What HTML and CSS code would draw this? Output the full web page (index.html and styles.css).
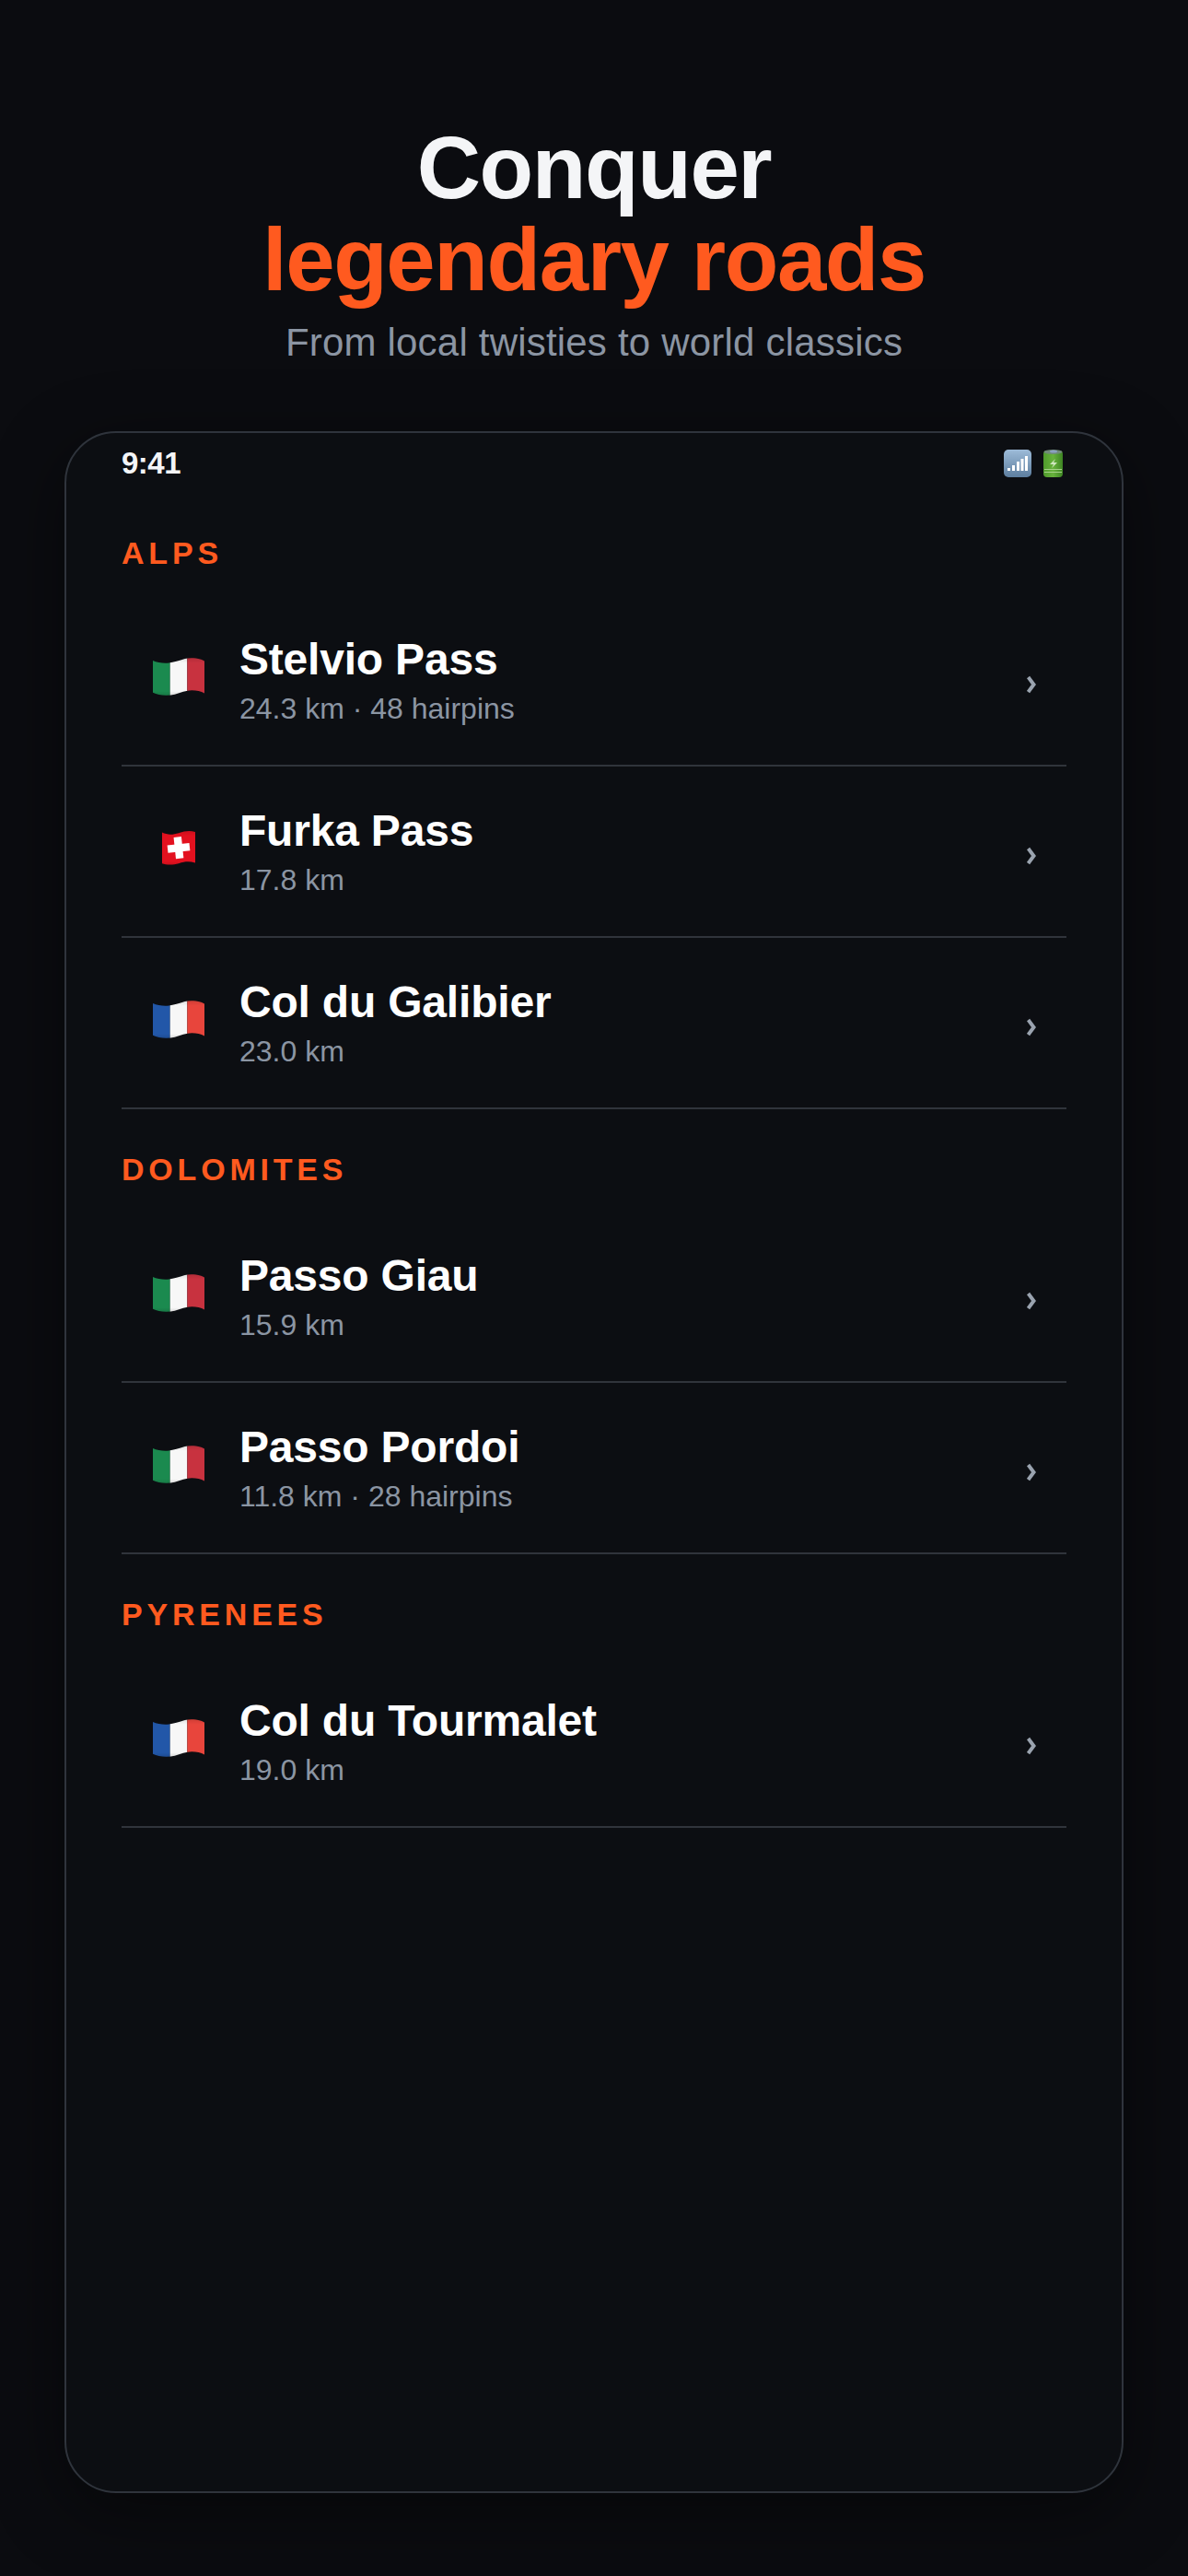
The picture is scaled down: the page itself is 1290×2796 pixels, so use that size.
FILE: index.html
```html
<!DOCTYPE html>
<html lang="en">
<head>
<meta charset="utf-8">
<title>Conquer legendary roads</title>
<link rel="stylesheet" href="styles.css">
</head>
<body>
<svg class="defs" width="0" height="0" aria-hidden="true">
  <defs>
    <clipPath id="wave-wide"><path d="M0 6C8 10 20 11 28 10C36 9 46 6 56 3C64 1 72 1 84 4C87 5 89 6 90 7V63C84 60 76 58 68 58C58 58 48 62 38 65C26 68 10 67 0 62Z"/></clipPath>
    <clipPath id="wave-ch"><path d="M0 4C10 9 20 8 30 5C42 1 50 0 60 3L60 59C50 56 42 56 30 60C20 63 8 63 0 60Z"/></clipPath>
    <linearGradient id="shade" x1="0" y1="0" x2="0" y2="1">
      <stop offset="0" stop-color="#000" stop-opacity=".12"/>
      <stop offset=".15" stop-color="#000" stop-opacity="0"/>
      <stop offset=".85" stop-color="#000" stop-opacity="0"/>
      <stop offset="1" stop-color="#000" stop-opacity=".18"/>
    </linearGradient>
    <g id="flag-it"><g clip-path="url(#wave-wide)"><rect width="30" height="70" fill="#1b8a4f"/><rect x="30" width="30" height="70" fill="#f7f7f7"/><rect x="60" width="30" height="70" fill="#c8323f"/><rect width="90" height="70" fill="url(#shade)"/></g></g>
    <g id="flag-fr"><g clip-path="url(#wave-wide)"><rect width="30" height="70" fill="#2257a8"/><rect x="30" width="30" height="70" fill="#f7f7f7"/><rect x="60" width="30" height="70" fill="#e8453c"/><rect width="90" height="70" fill="url(#shade)"/></g></g>
    <g id="flag-ch"><g clip-path="url(#wave-ch)"><rect width="60" height="66" fill="#e3111f"/><rect x="23" y="12" width="14" height="39" fill="#fff" transform="rotate(-6 30 32)"/><rect x="10" y="25" width="40" height="14" fill="#fff" transform="rotate(-6 30 32)"/><rect width="60" height="66" fill="url(#shade)"/></g></g>
    <path id="chev" d="M1.500 2L7.500 10L1.500 18" fill="none" stroke="#9aa3af" stroke-width="4"/>
  </defs>
</svg>

<header class="hero">
  <h1 class="hero-title">Conquer<br><span class="accent">legendary roads</span></h1>
  <p class="hero-sub">From local twisties to world classics</p>
</header>

<main class="phone">
  <div class="status">
    <span class="time">9:41</span>
    <span class="status-icons">
      <svg width="30" height="30" viewBox="0 0 30 30"><defs><linearGradient id="sig" x1="0" y1="0" x2="0" y2="1"><stop offset="0" stop-color="#9dbbd8"/><stop offset="1" stop-color="#5d7e9f"/></linearGradient></defs><rect width="30" height="30" rx="5" fill="url(#sig)"/><g fill="#fff"><rect x="4" y="20" width="3" height="3"/><rect x="9" y="17" width="3" height="6"/><rect x="14" y="13" width="3" height="10"/><rect x="18.500" y="10" width="3" height="13"/><rect x="23" y="7" width="3" height="16"/></g></svg>
      <svg width="21" height="30" viewBox="0 0 21 30"><defs><linearGradient id="bat" x1="0" y1="0" x2="1" y2="0"><stop offset="0" stop-color="#4f9a2c"/><stop offset=".5" stop-color="#67b23c"/><stop offset="1" stop-color="#3d8423"/></linearGradient></defs><rect y="1" width="21" height="29" rx="4" fill="url(#bat)"/><ellipse cx="10.500" cy="2.500" rx="10" ry="2.500" fill="#6f8a78"/><ellipse cx="11" cy="2" rx="4" ry="1.500" fill="#8aa0c0"/><path d="M13 10L7 16H11L9 20L15 14H11Z" fill="#cfe6bf"/><path d="M1 21.500H20M1 24.500H20" stroke="#a7d28b" stroke-width="1"/></svg>
    </span>
  </div>

  <section class="region">
    <h2 class="region-name">Alps</h2>
    <a class="road"><span class="flag"><svg width="56" height="44" viewBox="0 0 90 70"><use href="#flag-it"/></svg></span><span class="road-text"><span class="road-name">Stelvio Pass</span><span class="road-meta">24.3 km · 48 hairpins</span></span><svg class="chev" width="12" height="20" viewBox="0 0 12 20"><use href="#chev"/></svg></a>
    <a class="road"><span class="flag"><svg width="36" height="40" viewBox="0 0 60 66"><use href="#flag-ch"/></svg></span><span class="road-text"><span class="road-name">Furka Pass</span><span class="road-meta">17.8 km</span></span><svg class="chev" width="12" height="20" viewBox="0 0 12 20"><use href="#chev"/></svg></a>
    <a class="road"><span class="flag"><svg width="56" height="44" viewBox="0 0 90 70"><use href="#flag-fr"/></svg></span><span class="road-text"><span class="road-name">Col du Galibier</span><span class="road-meta">23.0 km</span></span><svg class="chev" width="12" height="20" viewBox="0 0 12 20"><use href="#chev"/></svg></a>
  </section>

  <section class="region">
    <h2 class="region-name">Dolomites</h2>
    <a class="road"><span class="flag"><svg width="56" height="44" viewBox="0 0 90 70"><use href="#flag-it"/></svg></span><span class="road-text"><span class="road-name">Passo Giau</span><span class="road-meta">15.9 km</span></span><svg class="chev" width="12" height="20" viewBox="0 0 12 20"><use href="#chev"/></svg></a>
    <a class="road"><span class="flag"><svg width="56" height="44" viewBox="0 0 90 70"><use href="#flag-it"/></svg></span><span class="road-text"><span class="road-name">Passo Pordoi</span><span class="road-meta">11.8 km · 28 hairpins</span></span><svg class="chev" width="12" height="20" viewBox="0 0 12 20"><use href="#chev"/></svg></a>
  </section>

  <section class="region">
    <h2 class="region-name">Pyrenees</h2>
    <a class="road"><span class="flag"><svg width="56" height="44" viewBox="0 0 90 70"><use href="#flag-fr"/></svg></span><span class="road-text"><span class="road-name">Col du Tourmalet</span><span class="road-meta">19.0 km</span></span><svg class="chev" width="12" height="20" viewBox="0 0 12 20"><use href="#chev"/></svg></a>
  </section>
</main>
</body>
</html>
```
FILE: styles.css
```css
* { box-sizing: border-box; }
html, body { margin: 0; padding: 0; }
body {
  width: 1290px;
  height: 2796px;
  overflow: hidden;
  background: #0b0c10;
  font-family: "Liberation Sans", Arial, sans-serif;
  color: #f4f5f7;
  display: flex;
  flex-direction: column;
  align-items: center;
}
.defs { position: absolute; }
.hero { padding-top: 132px; text-align: center; height: 468px; }
.hero-title {
  margin: 0;
  font-size: 96px;
  line-height: 100px;
  font-weight: 700;
  letter-spacing: -1.44px;
  color: #f4f5f7;
}
.accent { color: #ff5a1f; }
.hero-sub {
  margin: 16px 0 0;
  font-size: 42px;
  line-height: 48px;
  letter-spacing: .2px;
  color: #8b95a3;
}
.phone {
  width: 1150px;
  height: 2238px;
  padding: 0 60px;
  border: 2px solid #2f343c;
  border-radius: 56px;
  background: #0c0e12;
  box-shadow: 0 20px 80px rgba(0, 0, 0, .45);
}
.status {
  display: flex;
  justify-content: space-between;
  align-items: center;
  height: 44px;
  margin-top: 11px;
  margin-bottom: 9px;
}
.time { font-size: 33px; font-weight: 700; letter-spacing: -.5px; color: #f4f5f7; }
.status-icons { display: flex; gap: 13px; margin-right: 4px; }
.region { padding-top: 45px; }
.region:first-of-type { padding-top: 46px; }
.region-name {
  margin: 0 0 26px;
  font-size: 34px;
  line-height: 40px;
  font-weight: 700;
  letter-spacing: 4.8px;
  text-transform: uppercase;
  color: #ff5a1f;
}
.road {
  display: flex;
  align-items: center;
  height: 186px;
  border-bottom: 2px solid #30343b;
}
.flag {
  width: 128px;
  padding-right: 4px;
  display: flex;
  align-items: center;
  justify-content: center;
  margin-top: -6px;
  flex: none;
}
.flag svg { filter: blur(.4px); }
.road-text { display: flex; flex-direction: column; flex: 1; }
.road-name { font-size: 48px; line-height: 58px; font-weight: 700; letter-spacing: -.2px; color: #fff; }
.road-meta { font-size: 32px; line-height: 40px; color: #8b95a3; margin-top: 4px; }
.chev { flex: none; margin-right: 31px; margin-top: 10px; }
```
